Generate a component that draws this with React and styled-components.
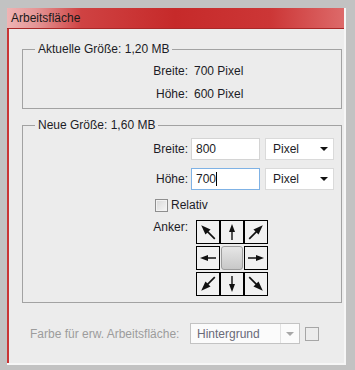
import React from "react";
import styled, { createGlobalStyle } from "styled-components";

const GlobalStyle = createGlobalStyle`
  html, body {
    margin: 0;
    padding: 0;
  }
  body {
    font-family: "Liberation Sans", Arial, sans-serif;
    font-size: 12px;
    color: #1c1c26;
    background: #c2c2c2;
  }
`;

const Window = styled.div`
  width: 355px;
  height: 370px;
  box-sizing: border-box;
  padding: 8px 9px 5px 7px;
  background: #c2c2c2;
  display: flex;
`;

const Panel = styled.div`
  flex: 1;
  display: flex;
  flex-direction: column;
  background: #ececec;
  border-right: 2px solid #f6f6f6;
  border-bottom: 2px solid #f6f6f6;
`;

const TitleBar = styled.div`
  height: 20px;
  flex: none;
  padding-left: 4px;
  display: flex;
  align-items: center;
  background: linear-gradient(
    90deg,
    #efb4b4 0%,
    #e49494 9%,
    #cf4242 22%,
    #c62a2a 50%,
    #cc3636 78%,
    #dd6a6a 100%
  );
  border-bottom: 1px solid #a92828;
  color: #1a1a1a;
`;

const Body = styled.div`
  flex: 1;
  border-left: 2px solid #c93434;
  padding: 13px 2px 0 13px;
  display: flex;
  flex-direction: column;
`;

const Group = styled.fieldset`
  margin: ${(p) => p.$top}px 0 0 0;
  padding: ${(p) => p.$pad};
  border: 1px solid #a2a2a2;
  min-inline-size: 0;
`;

const Legend = styled.legend`
  margin-left: 12px;
  padding: 0 3px;
  line-height: 14px;
`;

const Row = styled.div`
  display: flex;
  align-items: ${(p) => p.$align || "center"};
  height: ${(p) => p.$h}px;
  margin-top: ${(p) => p.$gap || 0}px;
`;

const Label = styled.div`
  width: 165px;
  flex: none;
  text-align: right;
  line-height: 14px;
  margin-right: ${(p) => p.$space}px;
`;

const TextBox = styled.div`
  width: 69px;
  height: 22px;
  box-sizing: border-box;
  border: 1px solid ${(p) => (p.$focused ? "#7fb2e5" : "#d4d4d4")};
  background: #fff;
  padding-left: 4px;
  display: flex;
  align-items: center;
`;

const Caret = styled.span`
  display: inline-block;
  width: 1px;
  height: 14px;
  background: #000;
`;

const Select = styled.div`
  margin-left: 5px;
  width: 69px;
  height: 22px;
  box-sizing: border-box;
  border: 1px solid #dadada;
  background: #fff;
  display: flex;
  align-items: center;
  justify-content: space-between;
  padding: 0 5px 0 7px;
`;

const DownArrow = styled.span`
  width: 0;
  height: 0;
  border-left: 4px solid transparent;
  border-right: 4px solid transparent;
  border-top: 4px solid ${(p) => p.$color};
`;

const Check = styled.span`
  width: 13px;
  height: 13px;
  box-sizing: border-box;
  margin-left: 132px;
  margin-right: 3px;
  border: 1px solid #8e8e8e;
  background: linear-gradient(135deg, #d8d8d8, #f6f6f6);
  box-shadow: inset 0 0 0 1px #f2f2f2;
`;

const AnchorGrid = styled.div`
  display: grid;
  grid-template-columns: repeat(3, 24px);
  grid-auto-rows: 24px;
  row-gap: 2px;
`;

const AnchorCell = styled.div`
  box-sizing: border-box;
  border: 1px solid #000;
  background: #f1f1f1;
  display: flex;
  align-items: center;
  justify-content: center;
  overflow: hidden;
`;

const AnchorCenter = styled.div`
  margin: 0 1px;
  border: 1px solid #9c9c9c;
  border-radius: 3px;
  background: linear-gradient(#e6e6e6, #c8c8c8);
`;

const ArrowSvg = styled.svg`
  width: 20px;
  height: 20px;
  flex: none;
  transform: rotate(${(p) => p.$angle}deg) scale(${(p) => p.$scale});
`;

const Footer = styled.div`
  display: flex;
  align-items: center;
  margin: 20px 0 0 8px;
  gap: 5px;
`;

const DisabledLabel = styled.span`
  width: 155px;
  color: #9c9c9c;
`;

const DisabledSelect = styled.div`
  width: 110px;
  height: 21px;
  box-sizing: border-box;
  border: 1px solid #c3c3c3;
  background: #fbfbfb;
  display: flex;
`;

const DisabledValue = styled.div`
  flex: 1;
  display: flex;
  align-items: center;
  padding-left: 6px;
  color: #6a6a78;
  border-right: 1px solid #e2e2e2;
`;

const DisabledButton = styled.div`
  width: 18px;
  display: flex;
  align-items: center;
  justify-content: center;
`;

const Swatch = styled.div`
  width: 14px;
  height: 14px;
  box-sizing: border-box;
  border: 1px solid #a6a6a6;
  background: #ececec;
`;

const Arrow = ({ angle }) => (
  <ArrowSvg $angle={angle} $scale={angle % 90 ? 1.2 : 1} viewBox="0 0 20 20">
    <line x1="10" y1="18" x2="10" y2="8" stroke="#111" strokeWidth="1.4" />
    <polygon points="10,2 7,10 13,10" fill="#111" />
  </ArrowSvg>
);

const anchors = [315, 0, 45, 270, null, 90, 225, 180, 135];

const App = () => (
  <>
    <GlobalStyle />
    <Window>
      <Panel>
        <TitleBar>Arbeitsfläche</TitleBar>
        <Body>
          <Group $top={0} $pad="3px 0 3px 0">
            <Legend>Aktuelle Größe: 1,20 MB</Legend>
            <Row $h={23}>
              <Label $space={6}>Breite:</Label>
              <span>700 Pixel</span>
            </Row>
            <Row $h={23}>
              <Label $space={6}>Höhe:</Label>
              <span>600 Pixel</span>
            </Row>
          </Group>

          <Group $top={9} $pad="6px 0 6px 0">
            <Legend>Neue Größe: 1,60 MB</Legend>
            <Row $h={22}>
              <Label $space={3}>Breite:</Label>
              <TextBox>800</TextBox>
              <Select>
                Pixel
                <DownArrow $color="#111" />
              </Select>
            </Row>
            <Row $h={22} $gap={8}>
              <Label $space={3}>Höhe:</Label>
              <TextBox $focused>
                700
                <Caret />
              </TextBox>
              <Select>
                Pixel
                <DownArrow $color="#111" />
              </Select>
            </Row>
            <Row $h={16} $gap={7}>
              <Check />
              Relativ
            </Row>
            <Row $h={76} $gap={7} $align="flex-start">
              <Label $space={8}>Anker:</Label>
              <AnchorGrid>
                {anchors.map((a, i) =>
                  a === null ? (
                    <AnchorCenter key={i} />
                  ) : (
                    <AnchorCell key={i}>
                      <Arrow angle={a} />
                    </AnchorCell>
                  )
                )}
              </AnchorGrid>
            </Row>
          </Group>

          <Footer>
            <DisabledLabel>Farbe für erw. Arbeitsfläche:</DisabledLabel>
            <DisabledSelect>
              <DisabledValue>Hintergrund</DisabledValue>
              <DisabledButton>
                <DownArrow $color="#a8a8a8" />
              </DisabledButton>
            </DisabledSelect>
            <Swatch />
          </Footer>
        </Body>
      </Panel>
    </Window>
  </>
);

export default App;
